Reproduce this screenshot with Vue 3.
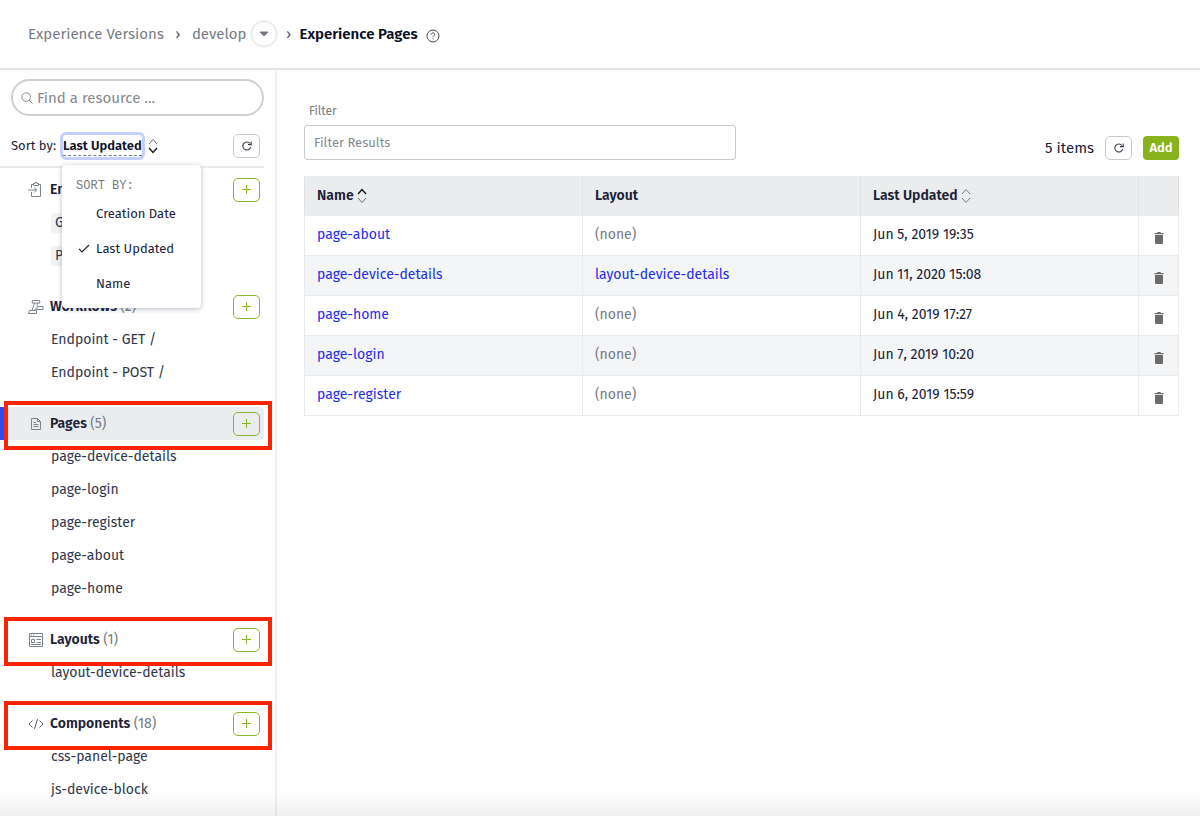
<script setup>
import { ref } from 'vue'

const search = ref('')
const filter = ref('')
const sortOptions = ['Creation Date', 'Last Updated', 'Name']
const sortBy = ref('Last Updated')

const sections = [
  { name: 'Endpoints', icon: 'endpoint', count: 2, items: ['GET /', 'POST /'], tags: true },
  { name: 'Workflows', icon: 'workflow', count: 2, items: ['Endpoint - GET /', 'Endpoint - POST /'] },
  {
    name: 'Pages', icon: 'page', count: 5, active: true, outlined: true,
    items: ['page-device-details', 'page-login', 'page-register', 'page-about', 'page-home']
  },
  { name: 'Layouts', icon: 'layout', count: 1, outlined: true, items: ['layout-device-details'] },
  { name: 'Components', icon: 'code', count: 18, outlined: true, items: ['css-panel-page', 'js-device-block'] }
]

const pages = [
  { name: 'page-about', layout: '', updated: 'Jun 5, 2019 19:35' },
  { name: 'page-device-details', layout: 'layout-device-details', updated: 'Jun 11, 2020 15:08' },
  { name: 'page-home', layout: '', updated: 'Jun 4, 2019 17:27' },
  { name: 'page-login', layout: '', updated: 'Jun 7, 2019 10:20' },
  { name: 'page-register', layout: '', updated: 'Jun 6, 2019 15:59' }
]
</script>

<template>
  <div class="app">
    <header class="topbar">
      <nav class="crumbs" aria-label="Breadcrumb">
        <a href="#">Experience Versions</a>
        <span class="sep">›</span>
        <a href="#">develop</a>
        <button class="round" type="button" aria-label="Switch version">
          <svg width="10" height="6" viewBox="0 0 10 6"><path d="M1 1h8L5 5z" fill="#767b86" stroke="#767b86" stroke-linejoin="round" /></svg>
        </button>
        <span class="sep">›</span>
        <h1>Experience Pages</h1>
        <button class="help" type="button" aria-label="Help">
          <svg width="14" height="14" viewBox="0 0 14 14" fill="none" stroke="#444a55">
            <circle cx="7" cy="7" r="6" />
            <path d="M5.2 5.6c0-1.1.8-1.8 1.8-1.8s1.8.7 1.8 1.6c0 1.2-1.7 1.3-1.7 2.7M7.1 9.3v1.1" />
          </svg>
        </button>
      </nav>
    </header>

    <div class="body">
      <aside class="sidebar">
        <label class="search">
          <svg width="12" height="12" viewBox="0 0 14 14" fill="none" stroke="#777c86">
            <circle cx="6" cy="6" r="5" /><path d="M9.500 9.500l4 4" />
          </svg>
          <input v-model="search" type="text" placeholder="Find a resource ..." aria-label="Find a resource">
        </label>

        <div class="sortbar">
          <span class="sort-label">Sort by:</span>
          <div class="sort-wrap">
            <button class="sort-current" type="button" aria-haspopup="menu" aria-expanded="true"><span>{{ sortBy }}</span></button>
            <div class="menu" role="menu">
              <p>SORT BY:</p>
              <button v-for="o in sortOptions" :key="o" type="button" role="menuitemradio" :aria-checked="o === sortBy" @click="sortBy = o">
                <span class="check">
                  <svg v-if="o === sortBy" width="12" height="9" viewBox="0 0 12 9" fill="none" stroke="#1b2238" stroke-width="1.2"><path d="M1 4.8L4 8l7-7" /></svg>
                </span>{{ o }}
              </button>
            </div>
          </div>
          <svg class="sorter" width="10" height="16" viewBox="0 0 10 16" fill="none">
            <path d="M1 6l4-4.5L9 6" stroke="#666b76" /><path d="M1 10l4 4.5L9 10" stroke="#111" stroke-width="1.3" />
          </svg>
          <button class="square" type="button" aria-label="Refresh resources">
            <svg width="10" height="10" viewBox="0 0 10 10" fill="none" stroke="#333947" stroke-width="1.1">
              <path d="M8.7 6.1A4 4 0 1 1 8 2.5M9.2.5v3.1H6" />
            </svg>
          </button>
        </div>

        <section v-for="s in sections" :key="s.name" class="group">
          <div class="group-head" :class="{ active: s.active, outlined: s.outlined }">
            <svg class="group-icon" width="16" height="16" viewBox="0 0 16 16" fill="none" stroke="#7d828c">
              <template v-if="s.icon === 'endpoint'">
                <path d="M3.500 6V2.500h2M10.500 2.500h2v12h-9V10M5.500 3.500v-2h1.500v-1h2v1h1.500v2zM0 8h8.500M6.200 5.500L8.700 8l-2.500 2.500" />
              </template>
              <template v-else-if="s.icon === 'workflow'">
                <path d="M4.500 1.500h7l.5 2.500H4zM6.500 4L4 11.500M9.500 4l-.5 3M9.500 7.500h5.500v3H8.500zM8.500 9L6 11.500M1.500 11.500h7v3h-8z" />
              </template>
              <template v-else-if="s.icon === 'page'">
                <path d="M3.500 2.500h6l3 3v8h-9zM9.500 2.500v3h3M5.500 6.500h2.500M5.500 8.500h5M5.500 10.500h5" />
              </template>
              <template v-else-if="s.icon === 'layout'">
                <path d="M1.500 1.500h13v13h-13zM1.500 4.500h13M3.500 7.500h3v3h-3zM8.500 7.500h4.500M8.500 10.500h4.500M3 12.500h10M3 3h1M5 3h1" />
              </template>
              <template v-else>
                <path d="M4.500 4.500L1 8l3.500 3.500M11.500 4.500L15 8l-3.500 3.500M9.500 3l-3 10" stroke="#555b66" />
              </template>
            </svg>
            <h2>{{ s.name }} <small>({{ s.count }})</small></h2>
            <button class="square plus" type="button" :aria-label="'Add to ' + s.name">
              <svg width="9" height="9" viewBox="0 0 9 9" stroke="#86b526"><path d="M4.500 0v9M0 4.500h9" /></svg>
            </button>
          </div>
          <ul>
            <li v-for="i in s.items" :key="i"><a href="#" :class="{ tag: s.tags }">{{ i }}</a></li>
          </ul>
        </section>
      </aside>

      <main class="main">
        <div class="tools">
          <div class="filter">
            <label for="filter">Filter</label>
            <input id="filter" v-model="filter" type="text" placeholder="Filter Results">
          </div>
          <div class="actions">
            <span class="total">5 items</span>
            <button class="square" type="button" aria-label="Refresh pages">
              <svg width="10" height="10" viewBox="0 0 10 10" fill="none" stroke="#333947" stroke-width="1.1">
                <path d="M8.7 6.1A4 4 0 1 1 8 2.5M9.2.5v3.1H6" />
              </svg>
            </button>
            <button class="add" type="button">Add</button>
          </div>
        </div>

        <table>
          <thead>
            <tr>
              <th>
                Name
                <svg width="10" height="16" viewBox="0 0 10 16" fill="none">
                  <path d="M1 6l4-4.5L9 6" stroke="#111" stroke-width="1.3" /><path d="M1 10l4 4.5L9 10" stroke="#666b76" />
                </svg>
              </th>
              <th>Layout</th>
              <th>
                Last Updated
                <svg width="10" height="16" viewBox="0 0 10 16" fill="none" stroke="#777c86">
                  <path d="M1 6l4-4.5L9 6M1 10l4 4.5L9 10" />
                </svg>
              </th>
              <th class="last" aria-label="Actions"></th>
            </tr>
          </thead>
          <tbody>
            <tr v-for="p in pages" :key="p.name">
              <td><a href="#">{{ p.name }}</a></td>
              <td><a v-if="p.layout" href="#">{{ p.layout }}</a><span v-else class="none">(none)</span></td>
              <td>{{ p.updated }}</td>
              <td class="last">
                <button class="trash" type="button" :aria-label="'Delete ' + p.name">
                  <svg width="10" height="12" viewBox="0 0 10 12" fill="#6b6b6b"><path d="M.5 1h2.500l.5-1h3l.5 1h2.500v1.200h-9zM1 3h8v8q0 1-1 1H2q-1 0-1-1z" /></svg>
                </button>
              </td>
            </tr>
          </tbody>
        </table>
      </main>
    </div>
    <div class="fade"></div>
  </div>
</template>

<style>
body {
  margin: 0;
}
</style>

<style scoped>
.app {
  position: relative;
  display: flex;
  flex-direction: column;
  min-height: 100vh;
  background: #fff;
  color: #1b2238;
  font: 14px/20px "Fira Sans", "Noto Sans", sans-serif;
}
.app *,
.app *::before,
.app *::after {
  box-sizing: border-box;
}
button {
  padding: 0;
  border: 0;
  background: none;
  color: inherit;
  font: inherit;
  cursor: pointer;
}
input {
  min-width: 0;
  font: inherit;
  color: inherit;
  outline: 0;
}
input::placeholder {
  color: #85888f;
  opacity: 1;
}
a {
  text-decoration: none;
}
svg {
  flex: none;
}
h1,
h2,
p,
ul {
  margin: 0;
  padding: 0;
  font-size: 14px;
}
ul {
  list-style: none;
}

.topbar {
  height: 70px;
  padding: 21px 28px 0;
  border-bottom: 2px solid #e6e6e7;
}
.crumbs {
  display: flex;
  align-items: center;
  color: #767b86;
  font-size: 15px;
}
.crumbs a {
  color: inherit;
}
.sep {
  width: 28px;
  color: #555b66;
  text-align: center;
}
.round {
  display: grid;
  place-items: center;
  width: 26px;
  height: 26px;
  margin-left: 5px;
  border: 1px solid #e2e2e4;
  border-radius: 50%;
  box-shadow: 0 0 2px #ddd;
}
.round + .sep {
  width: 22px;
}
h1 {
  color: #0b1026;
  font-size: 15px;
  font-weight: 600;
}
.help {
  display: grid;
  margin: 3px 0 0 8px;
}

.body {
  display: flex;
  flex: 1;
}
.sidebar {
  flex: none;
  width: 277px;
  padding-top: 9px;
  border-right: 2px solid #f0f0f1;
}
.search {
  display: flex;
  align-items: center;
  gap: 4px;
  height: 37px;
  margin: 0 11px;
  padding: 0 8px;
  border: 2px solid #d0d0d1;
  border-radius: 19px;
  font-size: 15px;
}
.search input {
  flex: 1;
  padding: 0;
  border: 0;
  background: none;
}
.sortbar {
  display: flex;
  align-items: center;
  height: 52px;
  margin: 0 11px 5px 0;
  padding: 10px 4px 0 11px;
  border-bottom: 2px solid #eaeaeb;
  font-size: 13px;
}
.sort-wrap {
  position: relative;
  margin: 0 3px 0 4px;
}
.sort-current {
  display: block;
  padding: 4px 3px;
  border-radius: 6px;
  box-shadow: inset 0 0 0 3px #c5cffc;
  color: #0b1026;
  font-weight: 600;
}
.sort-current span {
  display: block;
  border-bottom: 1px dashed #777c86;
  line-height: 19px;
}
.square {
  display: grid;
  place-items: center;
  flex: none;
  width: 27px;
  height: 24px;
  border: 1px solid #c8c9cc;
  border-radius: 5px;
}
.sortbar .square {
  margin-left: auto;
}
.menu {
  position: absolute;
  z-index: 2;
  top: 33px;
  left: 2px;
  width: 139px;
  padding: 11px 0 7px;
  border-radius: 4px;
  background: #fff;
  box-shadow: 0 1px 5px rgba(20, 25, 60, 0.3);
}
.menu p {
  padding-left: 14px;
  color: #767b86;
  font: 12px/20px "Liberation Mono", monospace;
}
.menu button {
  display: flex;
  align-items: center;
  width: 100%;
  height: 35px;
  color: #1b2238;
  white-space: nowrap;
}
.check {
  display: grid;
  width: 34px;
  padding-left: 16px;
}

.group {
  margin-bottom: 18px;
}
.group:last-child {
  margin-bottom: 0;
}
.group-head {
  position: relative;
  display: flex;
  align-items: center;
  height: 33px;
  margin-right: 11px;
  padding: 0 4px 0 28px;
  border-radius: 0 4px 4px 0;
}
.active {
  background: #ebecee;
}
.active::before {
  content: "";
  position: absolute;
  inset: 0 auto 0 0;
  width: 5px;
  background: #2b4bf2;
}
.outlined::after {
  content: "";
  position: absolute;
  inset: -6px -8px -10px 4px;
  border: 4px solid #fa2500;
  pointer-events: none;
}
h2 {
  margin: 0 auto 0 6px;
  font-weight: 600;
}
h2 small {
  color: #767b86;
  font-size: 14px;
  font-weight: 400;
}
.plus {
  border-color: #86b526;
}
li {
  display: flex;
  align-items: center;
  height: 33px;
  padding-left: 51px;
}
li a {
  color: #30374c;
}
.tag {
  padding: 0 4px;
  border-radius: 4px;
  background: #f1f2f4;
}

.main {
  flex: 1;
  min-width: 0;
  padding: 31px 21px 30px 27px;
}
.tools {
  display: flex;
  align-items: flex-end;
  justify-content: space-between;
  margin-bottom: 16px;
}
.filter {
  flex: 0 1 432px;
}
.filter label {
  display: block;
  margin-bottom: 4px;
  padding-left: 5px;
  color: #767b86;
  font-size: 12px;
}
.filter input {
  display: block;
  width: 100%;
  height: 35px;
  padding: 0 9px;
  border: 1px solid #c9cacc;
  border-radius: 3px;
  font-size: 13px;
}
.actions {
  display: flex;
  align-items: center;
}
.total {
  margin-right: 11px;
  font-size: 15px;
}
.add {
  width: 36px;
  height: 24px;
  margin-left: 11px;
  border-radius: 4px;
  background: #8ab31b;
  color: #fff;
  font-size: 13px;
  font-weight: 600;
}

table {
  width: 100%;
  border-collapse: collapse;
  table-layout: fixed;
}
th,
td {
  height: 40px;
  padding: 0 12px;
  border: 1px solid #eaebec;
  text-align: left;
}
th {
  height: 39px;
  border-color: #e0e1e3;
  border-top-color: #ebecee;
  border-bottom-color: #ebecee;
  background: #ebecee;
  font-weight: 600;
}
th svg {
  vertical-align: -4px;
}
td {
  padding-bottom: 2px;
}
th.last,
td.last {
  width: 40px;
  padding: 0;
}
tbody tr:nth-child(even) {
  background: #f4f5f7;
}
td a {
  color: #1c2df0;
}
.none {
  color: #767b86;
}
.trash {
  display: grid;
  margin: 5px auto 0;
}
.fade {
  position: absolute;
  inset: auto 0 0;
  height: 26px;
  background: linear-gradient(transparent, rgba(0, 0, 0, 0.06));
  pointer-events: none;
}
</style>
